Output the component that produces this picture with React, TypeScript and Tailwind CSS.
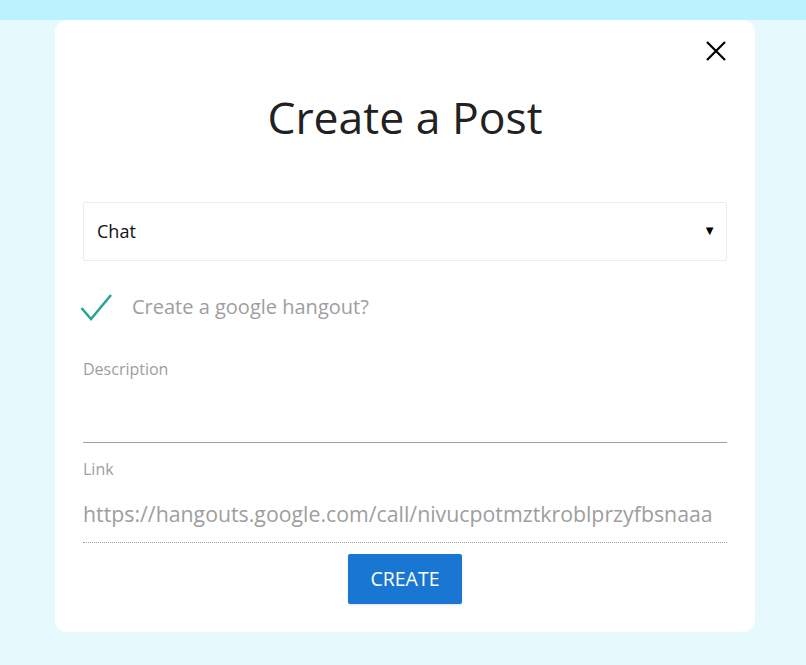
import { useState } from "react";

const App = () => {
  const [type] = useState("Chat");

  return (
    <div className="min-h-screen w-full bg-[#e6fafe]" style={{ fontFamily: "'Open Sans', sans-serif" }}>
      <div className="h-[20px] w-full bg-[#baf3fe]" />
      <div className="ml-[55px] w-[700px] rounded-[12px] bg-white px-[28px] pb-[28px] pt-[16px] relative">
        <button className="absolute right-[28px] top-[20px] text-black">
          <svg width="22" height="22" viewBox="0 0 22 22" fill="none" stroke="currentColor" strokeWidth="2.2">
            <path d="M2 2 L20 20 M20 2 L2 20" />
          </svg>
        </button>

        <h1 className="mt-[59px] text-center text-[44.5px] leading-[1] font-normal text-[#212121]">Create a Post</h1>

        <div className="mt-[62px] flex h-[59px] items-center justify-between rounded-[2px] border border-[#ececec] pl-[13px] pr-[10px]">
          <span className="text-[18px] text-[#111]">{type}</span>
          <span className="text-[13px] text-black">▼</span>
        </div>

        <div className="mt-[31px] flex items-center">
          <svg width="34" height="30" viewBox="0 0 34 30" fill="none" stroke="#26a69a" strokeWidth="2.6" className="-ml-[3px]">
            <path d="M1.5 16 L11 27 L31 3" />
          </svg>
          <span className="ml-[18px] text-[20px] text-[#9e9e9e]">Create a google hangout?</span>
        </div>

        <div className="mt-[35px] text-[16px] text-[#9e9e9e]">Description</div>
        <div className="mt-[61px] h-px bg-[#9e9e9e]" />

        <div className="mt-[14px] text-[16px] text-[#9e9e9e]">Link</div>
        <div className="mt-[20px] border-b border-dotted border-[#9e9e9e] pb-[16px] text-[21.3px] text-[#9e9e9e] leading-[1.2]">
          https://hangouts.google.com/call/nivucpotmztkroblprzyfbsnaaa
        </div>

        <div className="mt-[11px] flex justify-center">
          <button className="h-[50px] w-[114px] rounded-[2px] bg-[#1976d2] text-[19.5px] text-white shadow-sm">CREATE</button>
        </div>
      </div>
    </div>
  );
};

export default App;
